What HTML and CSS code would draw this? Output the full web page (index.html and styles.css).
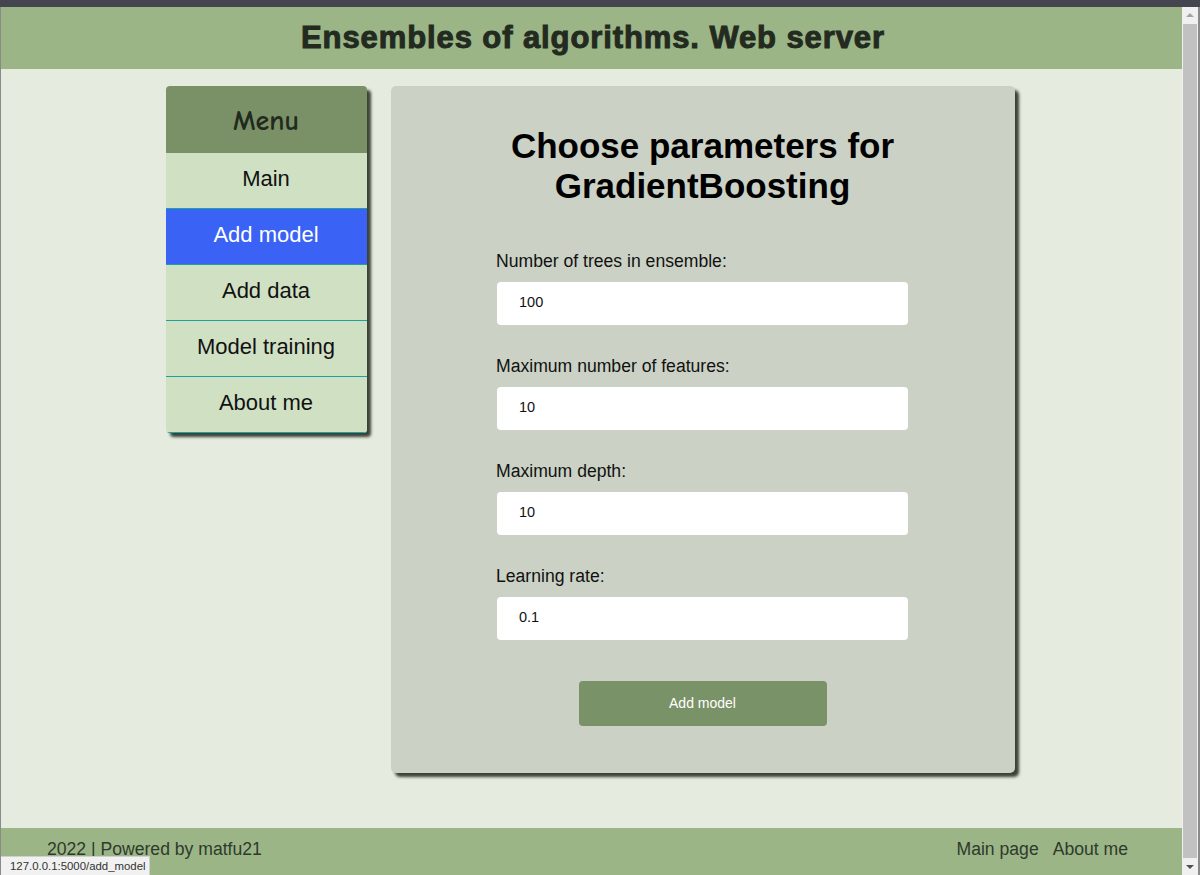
FILE: index.html
```html
<!DOCTYPE html>
<html lang="en">
<head>
<meta charset="utf-8">
<title>Add model</title>
<link rel="stylesheet" href="styles.css">
</head>
<body>
<div class="topbar"></div>
<div class="window">
  <div class="page">
    <header class="site-header">
      <h1>Ensembles of algorithms. Web server</h1>
    </header>
    <main class="content">
      <nav class="menu">
        <div class="menu-title">Menu</div>
        <a class="menu-item" href="#">Main</a>
        <a class="menu-item active" href="#">Add model</a>
        <a class="menu-item" href="#">Add data</a>
        <a class="menu-item" href="#">Model training</a>
        <a class="menu-item" href="#">About me</a>
      </nav>
      <section class="panel">
        <h2>Choose parameters for<br>GradientBoosting</h2>
        <form class="form">
          <div class="field">
            <label>Number of trees in ensemble:</label>
            <input type="text" value="100">
          </div>
          <div class="field">
            <label>Maximum number of features:</label>
            <input type="text" value="10">
          </div>
          <div class="field">
            <label>Maximum depth:</label>
            <input type="text" value="10">
          </div>
          <div class="field">
            <label>Learning rate:</label>
            <input type="text" value="0.1">
          </div>
          <div class="actions">
            <button type="button" class="btn">Add model</button>
          </div>
        </form>
      </section>
    </main>
    <footer class="site-footer">
      <span class="copy">2022 | Powered by matfu21</span>
      <span class="links"><a href="#">Main page</a><a href="#">About me</a></span>
    </footer>
    <div class="status">127.0.0.1:5000/add_model</div>
  </div>
  <div class="scrollbar">
    <div class="arrow up"></div>
    <div class="track"><div class="thumb"></div></div>
    <div class="arrow down"></div>
  </div>
</div>
</body>
</html>
```
FILE: styles.css
```css
* { box-sizing: border-box; }
html, body { margin: 0; padding: 0; height: 100%; }
body {
  font-family: "Liberation Sans", Arial, sans-serif;
  background: #e5ecdf;
  display: flex;
  flex-direction: column;
  height: 875px;
  overflow: hidden;
}
.topbar { height: 7px; background: #45454f; flex: none; }
.window { flex: 1; display: flex; min-height: 0; }
.page {
  flex: 1;
  display: flex;
  flex-direction: column;
  border-left: 1px solid #8a8a8a;
  position: relative;
}
.site-header {
  height: 62px;
  background: #9bb587;
  display: flex;
  align-items: center;
  justify-content: center;
  flex: none;
  padding-left: 3px;
}
.site-header h1 {
  margin: 0;
  font-size: 31px;
  font-weight: bold;
  color: #232a20;
  letter-spacing: 0.9px;
  -webkit-text-stroke: 1px #232a20;
}
.content {
  flex: 1;
  display: flex;
  justify-content: center;
  align-items: flex-start;
  gap: 24px;
  padding-top: 17px;
  padding-right: 3px;
}
.menu {
  width: 201px;
  display: flex;
  flex-direction: column;
  border-radius: 4px;
  overflow: hidden;
  box-shadow: 4px 4px 3px #3c4236;
}
.menu-title {
  height: 67px;
  background: #7a9167;
  display: flex;
  align-items: center;
  justify-content: center;
  font-family: "Comic Sans MS", "Comic Neue", cursive;
  font-weight: bold;
  font-size: 28px;
  color: #222a1e;
  padding-top: 2px;
}
.menu-item {
  height: 56px;
  display: flex;
  align-items: center;
  justify-content: center;
  background: #cfe0c3;
  color: #111;
  font-size: 22px;
  text-decoration: none;
  border-bottom: 1px solid #1aa3a0;
  padding-bottom: 4px;
}
.menu-item.active { background: #3a63f5; color: #fff; }
.panel {
  width: 624px;
  height: 687px;
  background: #cbd1c5;
  border-radius: 5px;
  box-shadow: 4px 4px 3px #3c4236;
  padding-top: 40px;
  display: flex;
  flex-direction: column;
  align-items: center;
}
.panel h2 {
  margin: 0;
  font-size: 35px;
  line-height: 40px;
  font-weight: bold;
  text-align: center;
  color: #000;
}
.form {
  width: 411px;
  margin-top: 45px;
  display: flex;
  flex-direction: column;
  gap: 31px;
}
.field { display: flex; flex-direction: column; gap: 10px; }
.field label {
  font-size: 17.6px;
  line-height: 21px;
  color: #111;
  margin-left: -1px;
}
.field input {
  height: 43px;
  border: none;
  border-radius: 4px;
  background: #fff;
  padding: 0 22px 3px;
  font-family: "Liberation Sans", Arial, sans-serif;
  font-size: 14.5px;
  color: #111;
}
.actions { display: flex; justify-content: center; margin-top: 10px; }
.btn {
  width: 248px;
  height: 45px;
  border: none;
  border-radius: 4px;
  background: #7a9267;
  color: #fff;
  font-family: "Liberation Sans", Arial, sans-serif;
  font-size: 14px;
  padding-bottom: 2px;
}
.site-footer {
  height: 47px;
  background: #9bb587;
  display: flex;
  align-items: center;
  justify-content: space-between;
  padding: 0 54px 4px 46px;
  font-size: 17.6px;
  color: #2f3a2b;
  flex: none;
}
.site-footer .links { display: flex; gap: 14px; }
.site-footer a { color: #2f3a2b; text-decoration: none; }
.status {
  position: absolute;
  left: 0;
  bottom: 0;
  height: 19px;
  padding: 0 3px 0 9px;
  background: #f1f1f1;
  border: 1px solid #d0d0d0;
  border-left: none;
  border-bottom: none;
  font-size: 11.4px;
  line-height: 18px;
  color: #333;
}
.scrollbar {
  width: 18px;
  flex: none;
  background: #f0f0f0;
  display: flex;
  flex-direction: column;
  border-right: 2px solid #8a8a8a;
}
.arrow { height: 17px; position: relative; }
.arrow::after {
  content: "";
  position: absolute;
  left: 4px;
  border-left: 4px solid transparent;
  border-right: 4px solid transparent;
}
.arrow.up::after { top: 6px; border-bottom: 4px solid #a3a3a3; }
.arrow.down::after { top: 7px; border-top: 4px solid #505050; }
.track { flex: 1; padding: 0 1px; }
.thumb { height: 100%; background: #c1c1c1; }
```
